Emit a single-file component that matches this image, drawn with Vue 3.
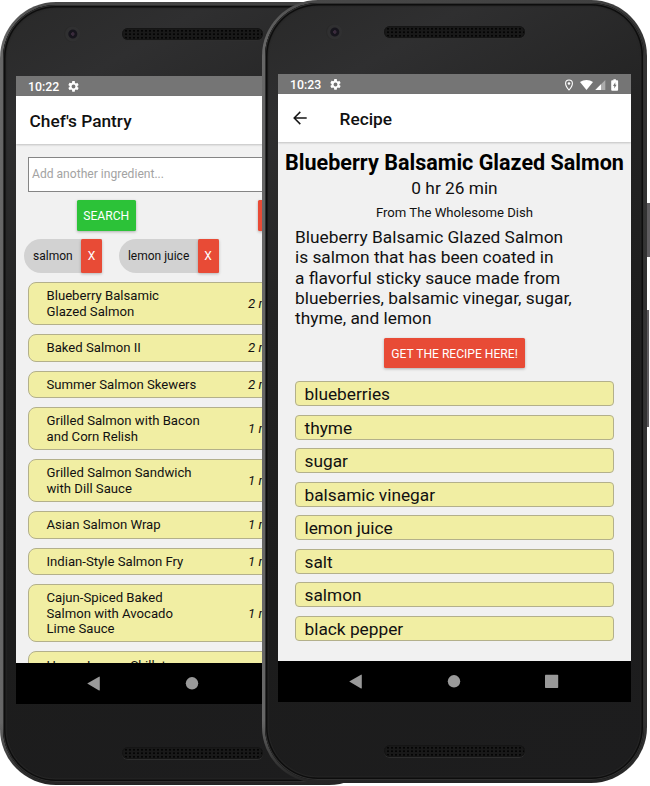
<script setup>
const recipes = [
  { name: 'Blueberry Balsamic\nGlazed Salmon', missing: '2 m' },
  { name: 'Baked Salmon II', missing: '2 m' },
  { name: 'Summer Salmon Skewers', missing: '2 m' },
  { name: 'Grilled Salmon with Bacon\nand Corn Relish', missing: '1 m' },
  { name: 'Grilled Salmon Sandwich\nwith Dill Sauce', missing: '1 m' },
  { name: 'Asian Salmon Wrap', missing: '1 m' },
  { name: 'Indian-Style Salmon Fry', missing: '1 m' },
  { name: 'Cajun-Spiced Baked\nSalmon with Avocado\nLime Sauce', missing: '1 m' },
  { name: 'Honey Lemon Skillet', missing: '' },
]
const chips = ['salmon', 'lemon juice']
const ingredients = ['blueberries', 'thyme', 'sugar', 'balsamic vinegar', 'lemon juice', 'salt', 'salmon', 'black pepper']
const gear = 'M19.14 12.94c.04-.3.06-.61.06-.94s-.02-.64-.07-.94l2.03-1.58a.49.49 0 0 0 .12-.61l-1.92-3.32a.49.49 0 0 0-.59-.22l-2.39.96a7 7 0 0 0-1.62-.94l-.36-2.54A.48.48 0 0 0 13.92 2h-3.84a.48.48 0 0 0-.47.41l-.36 2.54c-.59.24-1.13.57-1.62.94l-2.39-.96a.49.49 0 0 0-.59.22L2.74 8.87a.48.48 0 0 0 .12.61l2.03 1.58c-.05.3-.09.63-.09.94s.02.64.07.94l-2.03 1.58a.49.49 0 0 0-.12.61l1.92 3.32c.12.22.37.29.59.22l2.39-.96c.5.38 1.03.7 1.62.94l.36 2.54c.05.24.24.41.48.41h3.84c.24 0 .44-.17.47-.41l.36-2.54c.59-.24 1.13-.56 1.62-.94l2.39.96c.22.08.47 0 .59-.22l1.92-3.32a.48.48 0 0 0-.12-.61zM12 15.6a3.6 3.6 0 1 1 0-7.2 3.6 3.6 0 0 1 0 7.2z'
</script>

<template>
  <main class="stage">
    <section class="phone back">
      <span class="camera"></span>
      <span class="speaker top"></span>
      <span class="speaker bottom"></span>
      <div class="screen">
        <div class="status">
          <span>10:22</span>
          <svg class="gear" viewBox="0 0 24 24"><path :d="gear" /></svg>
        </div>
        <header class="bar"><h1>Chef's Pantry</h1></header>
        <div class="body pantry">
          <div class="field">Add another ingredient...</div>
          <div class="actions">
            <button class="btn search">SEARCH</button>
            <button class="btn clear"></button>
          </div>
          <div class="chips">
            <div v-for="chip in chips" :key="chip" class="chip">
              <span>{{ chip }}</span><button>X</button>
            </div>
          </div>
          <ul class="recipes">
            <li v-for="r in recipes" :key="r.name">
              <span class="name">{{ r.name }}</span><em>{{ r.missing }}</em>
            </li>
          </ul>
        </div>
        <nav class="nav">
          <svg viewBox="0 0 353 41"><path d="M71.2 20.5 83 13.7a.5.5 0 0 1 .8.5v12.9a.5.5 0 0 1-.8.4z" /><circle cx="176" cy="20.3" r="6.2" /></svg>
        </nav>
      </div>
    </section>

    <section class="phone front">
      <span class="camera"></span>
      <span class="speaker top"></span>
      <span class="speaker bottom"></span>
      <span class="key power"></span>
      <span class="key volume"></span>
      <div class="screen">
        <div class="status">
          <span>10:23</span>
          <svg class="gear" viewBox="0 0 24 24"><path :d="gear" /></svg>
          <svg class="signals" viewBox="0 0 56 12">
            <path d="M5 1a3.4 3.4 0 0 0-3.4 3.4C1.6 7 5 11 5 11s3.4-4 3.4-6.6A3.4 3.4 0 0 0 5 1z" fill="none" stroke="#fff" stroke-width="1.1" />
            <circle cx="5" cy="4.5" r="1.3" />
            <path d="M16 3.1C19.6 .3 25.4 .3 29 3.1L22.5 10.9z" />
            <path d="M41.3 1v10H31.3z" opacity=".4" />
            <path d="M37 5.3v5.7H31.3z" />
            <path d="M49.4 1.3V.3h2.5v1h1.3q.9 0 .9.9v8.6q0 .9-.9.9h-5.1q-.9 0-.9-.9V2.2q0-.9.9-.9z" />
            <path d="M51.3 3.2 49 6.9h1.3v2.7l2.3-3.8h-1.3z" fill="#757575" />
          </svg>
        </div>
        <header class="bar">
          <svg class="arrow" viewBox="0 0 14 14"><path d="M13.7 7H1.2M7.3 .9 1.2 7l6.1 6.1" /></svg>
          <h1>Recipe</h1>
        </header>
        <div class="body detail">
          <h2>Blueberry Balsamic Glazed Salmon</h2>
          <p class="time">0 hr 26 min</p>
          <p class="source">From The Wholesome Dish</p>
          <p class="about">Blueberry Balsamic Glazed Salmon<br />is salmon that has been coated in<br />a flavorful sticky sauce made from<br />blueberries, balsamic vinegar, sugar,<br />thyme, and lemon</p>
          <button class="btn get">GET THE RECIPE HERE!</button>
          <ul class="ingredients">
            <li v-for="i in ingredients" :key="i">{{ i }}</li>
          </ul>
        </div>
        <nav class="nav">
          <svg viewBox="0 0 353 41"><path d="M71.2 20.5 83 13.7a.5.5 0 0 1 .8.5v12.9a.5.5 0 0 1-.8.4z" /><circle cx="176" cy="20.3" r="6.2" /><rect x="267" y="13.7" width="13.2" height="13.2" rx=".7" /></svg>
        </nav>
      </div>
    </section>
  </main>
</template>

<style>
body { margin: 0; background: #fff; }
</style>

<style scoped>
* { box-sizing: border-box; }
.stage { position: relative; width: 650px; height: 786px; overflow: hidden; font-family: Roboto, sans-serif; color: #111; }
h1, h2, p, ul { margin: 0; padding: 0; font-weight: 400; }
li { list-style: none; }
button { font: inherit; border: 0; padding: 0; }

.phone {
  position: absolute;
  width: 385px;
  height: 783px;
  padding: 71px 13px 0;
  border: 3px solid transparent;
  border-radius: 56px;
  background:
    linear-gradient(150deg, #292929 0%, #2f2f30 12%, #232323 32%, #1c1c1c 60%, #1d1d1e 100%) padding-box,
    linear-gradient(to bottom, transparent 92%, #242424 100%) border-box,
    linear-gradient(to right, #686868 0, #5d5d5d 10px, #484848 50px, #404040 340px, #333 100%) border-box;
  box-shadow: inset 0 0 0 1px #303030, inset 0 0 0 2.5px #0d0d0d, inset 0 0 1px 3.5px #262626;
}
.back { left: 0; top: 2px; }
.front { left: 262px; top: 0; }
.camera {
  position: absolute; left: 61px; top: 21px; width: 16px; height: 16px; border-radius: 50%;
  background: radial-gradient(circle at 55% 50%, #3a2b3c 0 1.5px, #17151d 2px 4px, #303031 5px 7px, #292929 8px);
}
.speaker {
  position: absolute; left: 119px; width: 141px; height: 12px; border-radius: 6px;
  background: radial-gradient(circle, #050505 0 .9px, #191919 1.3px) 2px 1px / 4px 3.5px;
  box-shadow: inset 0 0 0 1px #151515, 0 1px 0 #2e2e2e;
}
.top { top: 23px; }
.bottom { top: 742px; }
.key { position: absolute; left: 382px; width: 3px; background: #5f5d60; }
.power { top: 200px; height: 54px; }
.volume { top: 307px; height: 117px; width: 2px; }

.screen { width: 353px; height: 628px; display: flex; flex-direction: column; background: #f1f1f1; overflow: hidden; }
.status { height: 20px; flex: none; display: flex; align-items: center; padding: 1px 11px 0 12px; background: #757575; color: #fff; font-size: 12.3px; font-weight: 500; line-height: 18px; }
.status svg { fill: #fff; }
.status .gear { width: 13px; height: 13px; margin-left: 8px; }
.signals { width: 56px; height: 12px; margin-left: auto; }
.bar { height: 48px; flex: none; display: flex; align-items: center; background: #fff; box-shadow: 0 1px 2px rgba(0, 0, 0, .2); position: relative; padding: 2px 13.5px 0; }
.bar h1 { font-size: 17.3px; font-weight: 500; line-height: 20px; }
.arrow { width: 14px; height: 14px; margin: -2px 32.5px 0 1.5px; fill: none; stroke: #151515; stroke-width: 1.5; }
.body { flex: 1; min-height: 0; overflow: hidden; }
.nav { height: 41px; flex: none; background: #000; }
.nav svg { display: block; width: 353px; height: 41px; fill: #999; }

.pantry { padding: 13px 12px 0; }
.field { height: 34.5px; display: flex; align-items: center; border: 1px solid #858585; background: #fff; color: #a3a3a3; font-size: 12.1px; padding-left: 3px; }
.actions { display: flex; margin-top: 8.5px; padding-left: 48.5px; gap: 122px; }
.btn { height: 30.5px; border-radius: 1.5px; color: #fff; font-size: 12.1px; line-height: 32px; text-align: center; box-shadow: 0 1px 3px rgba(0, 0, 0, .28); }
.search { width: 59.5px; background: #2cc238; }
.clear { width: 60px; background: #e84b36; }
.chips { display: flex; gap: 17px; margin: 8.5px 0 0 -4px; }
.chip { display: flex; height: 34px; border-radius: 17px 0 0 17px; background: #d2d2d2; padding-left: 9px; font-size: 12px; line-height: 35px; }
.chip span { margin-right: 8.3px; }
.chip button { width: 21px; background: #e84b36; color: #fff; border-radius: 1.5px; font-size: 12px; line-height: 31px; box-shadow: 0 1px 3px rgba(0, 0, 0, .25); }
.recipes { display: flex; flex-direction: column; gap: 9px; margin-top: 9.3px; }
.recipes li { display: flex; align-items: center; flex: none; padding: 5.15px 0 5.15px 17.5px; border: 1px solid #b3b08b; border-radius: 8px; background: #f1eea3; font-size: 13.15px; line-height: 15.3px; }
.name { width: 201.5px; white-space: pre-line; }

.detail { display: flex; flex-direction: column; padding: 0 17px; }
.detail h2 { font-size: 21.55px; font-weight: 700; line-height: 26px; text-align: center; white-space: nowrap; margin: 7.5px -17px 0; color: #000; }
.time { font-size: 17.3px; line-height: 20px; text-align: center; margin-top: 2.5px; }
.source { font-size: 13.15px; line-height: 16px; text-align: center; margin-top: 6.5px; }
.about { font-size: 17.32px; line-height: 20.3px; margin-top: 6.5px; }
.get { width: 140.5px; flex: none; align-self: center; margin-top: 9.5px; background: #e84b36; }
.ingredients { display: flex; flex-direction: column; gap: 8.5px; margin-top: 12.7px; }
.ingredients li { height: 25px; flex: none; border: 1px solid #b3b08b; border-radius: 4px; background: #f1eea3; padding-left: 8.5px; font-size: 17.3px; line-height: 25px; }
</style>
